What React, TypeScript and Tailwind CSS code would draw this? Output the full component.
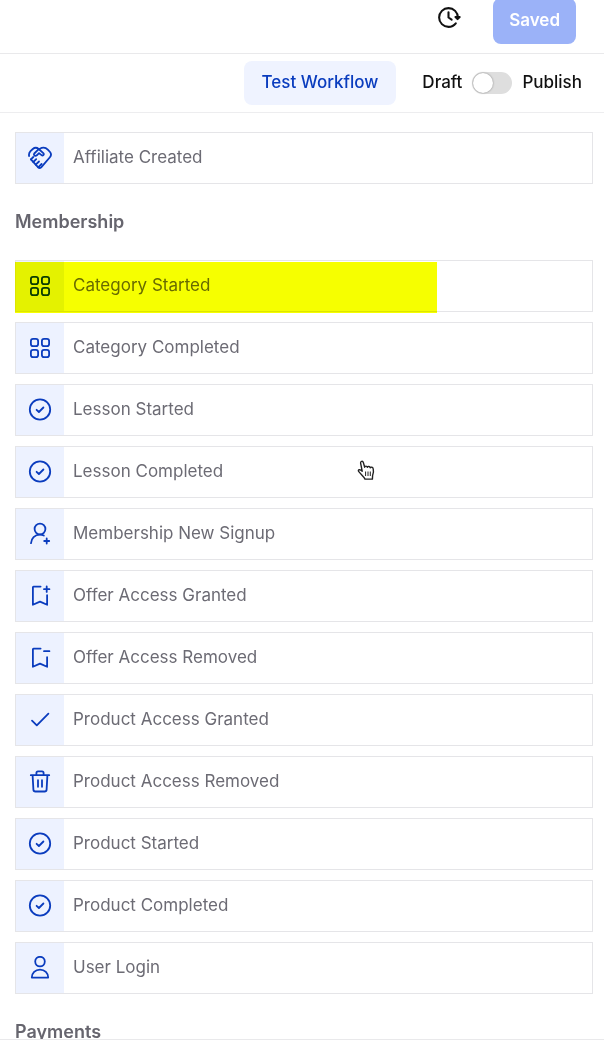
import type { ReactNode } from "react";

function Icon({ children, size = 24, width = 1.8 }: { children: ReactNode; size?: number; width?: number }) {
  return (
    <svg
      width={size}
      height={size}
      viewBox="0 0 24 24"
      fill="none"
      stroke="currentColor"
      strokeWidth={width}
      strokeLinecap="round"
      strokeLinejoin="round"
      aria-hidden="true"
    >
      {children}
    </svg>
  );
}

const handshake = (
  <Icon width={1.8}>
    <path d="M1.100 10C.7 8 1.200 6.400 2.500 5.100L4.800 3C6.600 1.500 8.900 1.500 10.700 3L15.300 7.200c1.200 1.300-.4 3-1.800 1.900L11 7.100 8.800 9.300C7.200 10.700 5.100 9.100 6.300 7.500L10.200 3.700" />
    <path d="M11.500 2.900C14.200 1.300 17.600 1.300 19.800 3.600L22 6C23.300 7.600 23.300 9.600 21.900 11.300L13.400 21.200C12.600 22.200 11.200 22.300 10.200 21.400L2.900 13.300" />
    <path d="M2.900 13.300L5.300 11M5.300 16L8.200 13.200M7.700 18.700L11 15.500M10.200 21.400L13.600 18" />
  </Icon>
);

const grid = (
  <Icon>
    <rect x="2.900" y="2.900" width="7.200" height="7.200" rx="2.200" />
    <rect x="13.900" y="2.900" width="7.200" height="7.200" rx="2.200" />
    <rect x="2.900" y="13.900" width="7.200" height="7.200" rx="2.200" />
    <rect x="13.900" y="13.900" width="7.200" height="7.200" rx="2.200" />
  </Icon>
);

const checkCircle = (
  <Icon>
    <circle cx="12" cy="11.500" r="10.200" />
    <path d="M8.600 11.800l2.300 2.200 4.500-4.500" />
  </Icon>
);

const userPlus = (
  <Icon>
    <circle cx="12" cy="7" r="5.400" />
    <path d="M3 21.200c.3-4.800 3.600-8.600 9-8.600 1.500 0 2.700.3 3.800.9M18.700 16.500v5M16.200 19h5" />
  </Icon>
);

const bookmarkPlus = (
  <Icon>
    <path d="M12.600 2.600H5.500a.6.6 0 0 0-.6.6V20.800L12 17.600l7.100 3.200V11.200M18.700 2.500v5.400M16 5.200h5.400" />
  </Icon>
);

const bookmarkMinus = (
  <Icon>
    <path d="M12.600 2.600H5.500a.6.6 0 0 0-.6.6V20.800L12 17.600l7.100 3.200V11.200M16 5.200h5.400" />
  </Icon>
);

const check = (
  <Icon>
    <path d="M4 12.600l4.800 4.800L20.400 5.600" />
  </Icon>
);

const trash = (
  <Icon>
    <path d="M2.800 5.200h18.400M8.400 5V2.900a1.600 1.600 0 0 1 1.600-1.600h4a1.600 1.600 0 0 1 1.600 1.600V5M4.600 5.400l.8 14.200a2 2 0 0 0 2 1.900h9.200a2 2 0 0 0 2-1.900l.8-14.200M10 10.200v6.600M14 10.200v6.600" />
  </Icon>
);

const user = (
  <Icon>
    <circle cx="12" cy="5.600" r="4.800" />
    <path d="M3.800 21.600c0-4.500 3.500-8 8.200-8s8.200 3.500 8.200 8z" />
  </Icon>
);

const membership: { label: string; icon: ReactNode; highlighted?: boolean }[] = [
  { label: "Category Started", icon: grid, highlighted: true },
  { label: "Category Completed", icon: grid },
  { label: "Lesson Started", icon: checkCircle },
  { label: "Lesson Completed", icon: checkCircle },
  { label: "Membership New Signup", icon: userPlus },
  { label: "Offer Access Granted", icon: bookmarkPlus },
  { label: "Offer Access Removed", icon: bookmarkMinus },
  { label: "Product Access Granted", icon: check },
  { label: "Product Access Removed", icon: trash },
  { label: "Product Started", icon: checkCircle },
  { label: "Product Completed", icon: checkCircle },
  { label: "User Login", icon: user },
];

function TriggerRow({ label, icon, highlighted }: { label: string; icon: ReactNode; highlighted?: boolean }) {
  return (
    <button
      type="button"
      className="relative flex h-[52px] w-full shrink-0 cursor-pointer items-stretch border border-[#e5e5e8] bg-white text-left"
    >
      <span className="flex w-12 items-center justify-center bg-[#edf2ff] text-[#0a3cbe]">{icon}</span>
      <span className="flex items-center pl-[9px] text-[17px] text-[#6c6b74]">{label}</span>
      {highlighted && (
        <span className="absolute top-px -bottom-[2px] -left-px w-[422px] max-w-full bg-[#f6ff00] mix-blend-multiply" />
      )}
    </button>
  );
}

function SectionTitle({ children }: { children: ReactNode }) {
  return <h2 className="flex h-19 shrink-0 items-center text-lg font-semibold text-[#66656e]">{children}</h2>;
}

function Pointer() {
  return (
    <svg
      className="pointer-events-none absolute top-[460px] left-[357px]"
      width="18"
      height="21"
      viewBox="0 0 18 21"
      fill="#fff"
      stroke="#222"
      strokeWidth="1.400"
      strokeLinejoin="round"
      aria-hidden="true"
    >
      <path d="M5.200 11.200L3.600 3.200C3.200 1.200 5.700.5 6.300 2.400L7.700 7.200c.2-1.500 2.300-1.500 2.700 0 .5-1.200 2.500-1 2.800.5.800-1 2.700-.5 3 1 .6 2.600.4 4.400-.6 6.800l-.2 3.600H8C7 16.800 4 14.600 1.600 11.400c-1-1.700 1.400-2.500 3.600-.2z" />
      <path d="M8.600 11.500v4.500M11 11.500v4.500M13.300 11.500v4.500" strokeWidth="1" />
    </svg>
  );
}

export default function App() {
  return (
    <div className="relative flex h-screen flex-col overflow-hidden bg-white font-['Inter',sans-serif]">
      <header className="flex h-[54px] shrink-0 items-end justify-end gap-8 border-b border-[#e9e9eb] pr-7 pb-[9px]">
        <button type="button" aria-label="Version history" className="mb-[14px] flex text-[#111]">
          <Icon size={25} width={2}>
            <path d="M22.700 11.500L20.700 13.500L18.700 11.500zM20.945 13C20.981 12.672 21 12.338 21 12C21 7.029 16.971 3 12 3C7.029 3 3 7.029 3 12C3 16.971 7.029 21 12 21C14.827 21 17.350 19.696 19 17.657M12 7V12L15 14" />
          </Icon>
        </button>
        <button type="button" className="h-[46px] shrink-0 rounded-lg bg-[#9bb2f8] px-4 text-[17px] font-semibold text-white">
          Saved
        </button>
      </header>

      <div className="flex h-[59px] shrink-0 items-center justify-end border-b border-[#ededef] pr-[22px]">
        <button type="button" className="mr-[26px] h-11 rounded-lg bg-[#eff3ff] px-[18px] text-[17px] font-medium text-[#0a3cbe]">
          Test Workflow
        </button>
        <label htmlFor="publish" className="flex items-center gap-[10px] text-[17px] font-medium text-[#111]">
          <span>Draft</span>
          <input
            id="publish"
            type="checkbox"
            role="switch"
            className="h-[22px] w-10 appearance-none rounded-full bg-[#dedede] p-px before:block before:size-5 before:rounded-full before:bg-white before:shadow-[0_0_2px_rgba(0,0,0,0.45)] checked:bg-[#0a3cbe] checked:before:ml-[18px]"
          />
          <span>Publish</span>
        </label>
      </div>

      <main className="flex min-h-0 flex-1 flex-col overflow-hidden pt-[19px] pr-[11px] pl-[15px]">
        <TriggerRow label="Affiliate Created" icon={handshake} />
        <SectionTitle>Membership</SectionTitle>
        <div className="flex shrink-0 flex-col gap-[10px]">
          {membership.map((item) => (
            <TriggerRow key={item.label} {...item} />
          ))}
        </div>
        <SectionTitle>Payments</SectionTitle>
      </main>

      <footer className="h-6 shrink-0 border-t border-[#e9e9eb] bg-white" />
      <Pointer />
    </div>
  );
}
